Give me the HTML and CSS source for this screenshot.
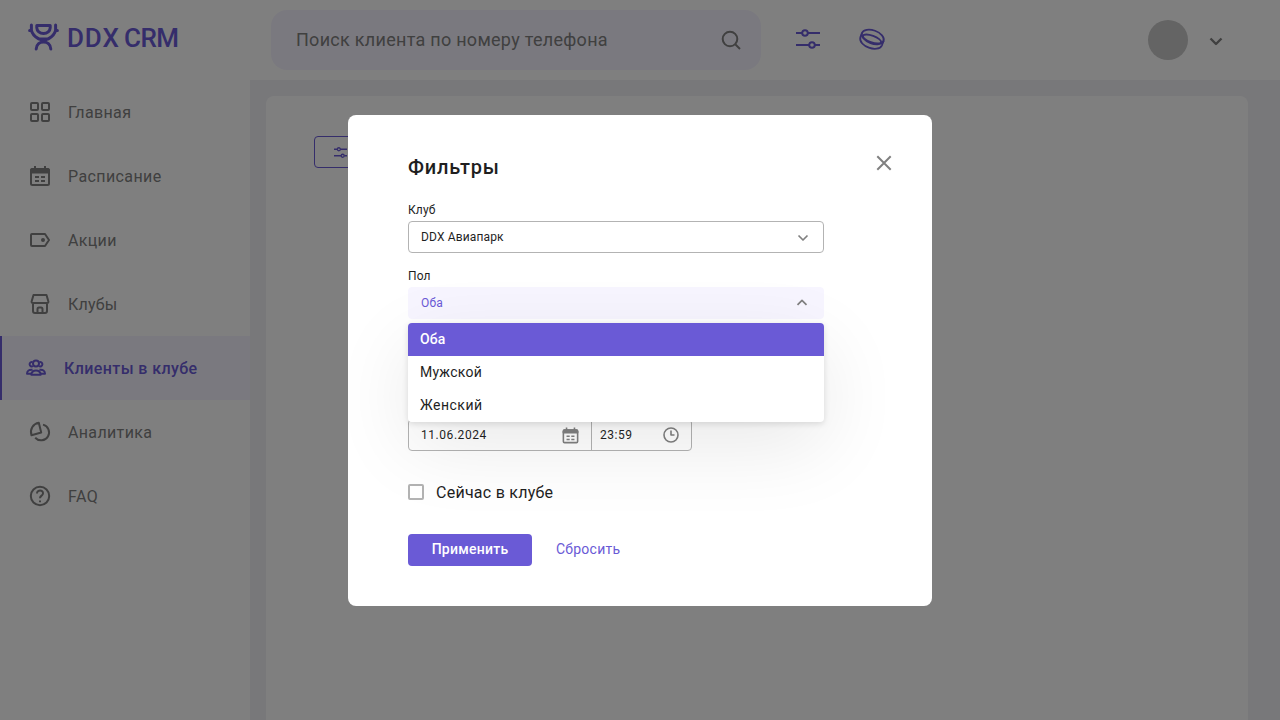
FILE: index.html
```html
<!DOCTYPE html>
<html lang="ru">
<head>
<meta charset="utf-8">
<title>DDX CRM</title>
<link rel="stylesheet" href="styles.css">
</head>
<body>
<svg class="defs" aria-hidden="true">
  <symbol id="calendar" viewBox="0 0 24 24"><path d="M3 8.500V6.500Q3 5 4.500 5h15Q21 5 21 6.500v2z" fill="currentColor"/><rect x="3" y="5" width="18" height="16" rx="1.500"/><path d="M7 2V5M17 2V5M7 13h4M13 13h4M7 17h4M13 17h4"/></symbol>
  <symbol id="sliders" viewBox="0 0 24 20"><path d="M0 4h6M12 4h12M0 16h13M19 16h5"/><circle cx="9" cy="4" r="2.800"/><circle cx="16" cy="16" r="2.800"/></symbol>
</svg>
<div class="app">
  <aside class="sidebar">
    <div class="logo">
      <svg class="logo-mark" width="32" height="28" viewBox="0 0 32 28"><path d="M8.800 2.600h13.400v2.200a6.700 5.700 0 0 1-13.400 0zM3.400 2v5.500M27.600 2v5.500M1.600 7.400h1.800C5 13.500 9 14.500 11 16h9c2-1.500 6-2.500 7.600-8.600h1.800M8.200 26c.4-9.500 14.200-9.500 14.600 0M12.500 16.500l3 1.200 3-1.200"/></svg>
      <span class="logo-text"><span class="logo-ddx">DDX</span><span class="logo-crm">CRM</span></span>
    </div>
    <nav class="menu">
      <a class="item"><svg width="24" height="24" viewBox="0 0 24 24"><rect x="3" y="3" width="7" height="7" rx="1"/><rect x="14" y="3" width="7" height="7" rx="1"/><rect x="3" y="14" width="7" height="7" rx="1"/><rect x="14" y="14" width="7" height="7" rx="1"/></svg><span class="t-main">Главная</span></a>
      <a class="item"><svg width="24" height="24"><use href="#calendar"/></svg><span class="t-schedule">Расписание</span></a>
      <a class="item"><svg width="24" height="24" viewBox="0 0 24 24"><path d="M4 6h13l4 6-4 6H4q-1 0-1-1V7q0-1 1-1z"/><circle cx="15" cy="12" r="2" fill="currentColor" stroke="none"/></svg><span class="t-promo">Акции</span></a>
      <a class="item"><svg width="24" height="24" viewBox="0 0 24 24"><path d="M5.500 3h13l1.900 6.500q.2 1.500-1.300 1.500H4.900Q3.400 11 3.600 9.500zM5 11v8q0 2 2 2h10q2 0 2-2v-8M9.500 21v-4q0-1.500 1.500-1.500h2q1.500 0 1.500 1.500v4"/></svg><span class="t-clubs">Клубы</span></a>
      <a class="item active"><svg width="24" height="24" viewBox="0 0 24 24"><circle cx="12" cy="7.500" r="3"/><path d="M8.500 6.200a2.200 2.200 0 1 0 .4 4M15.500 6.200a2.200 2.200 0 1 1-.4 4M7.300 18.700c-.4-5.500 9.800-5.500 9.400 0zM8.500 13.700c-3.400-.4-5.500 1-5.500 4.100h4M15.500 13.700c3.400-.4 5.500 1 5.500 4.100h-4"/></svg><span class="t-clients">Клиенты в клубе</span></a>
      <a class="item"><svg width="24" height="24" viewBox="0 0 24 24"><path d="M10.800 2.800 13.200 12.500 3.500 15.300C1.500 9.500 5 3.800 10.800 2.800zM15 4.600a8 8 0 1 1-7.800 13.200"/></svg><span class="t-analytics">Аналитика</span></a>
      <a class="item"><svg width="24" height="24" viewBox="0 0 24 24"><circle cx="12" cy="12" r="9.200"/><path d="M9 9.500c0-4 6.300-3.800 6 0-.2 2.300-3 2-3 4.700M12 16.500v1.800"/></svg><span class="t-faq">FAQ</span></a>
    </nav>
  </aside>
  <div class="content">
    <header class="topbar">
      <div class="search"><span>Поиск клиента по номеру телефона</span><svg width="24" height="24" viewBox="0 0 24 24"><circle cx="11" cy="11" r="7.300"/><path d="m16.500 16.500 4.500 4.500"/></svg></div>
      <svg class="tool-sliders" width="24" height="20"><use href="#sliders"/></svg>
      <svg class="tool-ring" width="28" height="24" viewBox="0 0 28 24"><g transform="rotate(20 14 12)"><ellipse cx="14" cy="9.800" rx="11.500" ry="6.600"/><ellipse cx="14" cy="12" rx="9.600" ry="3.300"/><path d="M2.500 9.500v5c1 9 22 9 23 0v-5"/></g></svg>
      <div class="avatar"></div>
      <svg class="user-arrow" width="16" height="16" viewBox="0 0 16 16"><path d="m2.500 5.500 5.500 5.500 5.500-5.500"/></svg>
    </header>
    <main class="page"><section class="panel"><div class="filter-button"><svg width="13" height="11"><use href="#sliders"/></svg></div></section></main>
  </div>
</div>
<div class="overlay">
  <form class="modal">
    <div class="modal-head"><h1>Фильтры</h1><svg width="24" height="24" viewBox="0 0 24 24"><path d="M5.300 5.300 18.700 18.700M18.700 5.300 5.300 18.700"/></svg></div>
    <div class="field"><label class="t-club">Клуб</label><div class="select"><span class="t-park">DDX Авиапарк</span><svg width="16" height="16" viewBox="0 0 16 16"><path d="m3.500 6.500 4.500 4.500 4.500-4.500"/></svg></div></div>
    <div class="field sex"><label class="t-sex">Пол</label><div class="select open"><span>Оба</span><svg width="16" height="16" viewBox="0 0 16 16"><path d="m3.500 9.800 4.500-4.500 4.500 4.500"/></svg></div>
      <div class="dropdown"><div class="option selected">Оба</div><div class="option t-male">Мужской</div><div class="option t-female">Женский</div></div>
    </div>
    <div class="period"><div class="date"><span>11.06.2024</span><svg width="19" height="19" class="date-icon"><use href="#calendar"/></svg></div><div class="time"><span>23:59</span><svg width="20" height="20" viewBox="0 0 20 20" class="clock"><circle cx="10" cy="10" r="7"/><path d="M10 5.500V10h3.500"/></svg></div></div>
    <div class="check"><span class="box"></span><span class="t-now">Сейчас в клубе</span></div>
    <div class="actions"><span class="apply">Применить</span><span class="reset">Сбросить</span></div>
  </form>
</div>
</body>
</html>
```
FILE: styles.css
```css
* { box-sizing: border-box; }
body { margin: 0; overflow: hidden; font-family: Roboto, "Noto Sans", sans-serif; color: #1f1f1f; }
svg { display: block; flex: none; fill: none; stroke: currentColor; stroke-width: 2; stroke-linejoin: round; }
.defs { position: absolute; width: 0; height: 0; }
.app { display: flex; height: 720px; }
.sidebar { width: 250px; background: #fff; flex: none; }
.logo { display: flex; height: 80px; padding: 23px 0 0 28px; color: #6a5ad6; }
.logo-mark { stroke-width: 3; stroke-linecap: round; }
.logo-text { display: flex; margin-left: 7px; font-size: 26px; line-height: 30px; font-weight: 500; }
.logo-ddx { width: 57px; letter-spacing: .9px; }
.logo-crm { letter-spacing: -.5px; }
.item { display: flex; align-items: center; height: 64px; padding-left: 28px; gap: 16px; color: #808080; font-size: 16px; letter-spacing: .35px; }
.item.active { background: #f5f3ff; color: #6a5ad6; border-left: 2px solid #6a5ad6; padding-left: 22px; font-weight: 500; letter-spacing: .4px; }
.t-schedule { letter-spacing: .4px; }
.t-clubs { letter-spacing: .2px; }
.t-faq { letter-spacing: .5px; }
.content { flex: 1; display: flex; flex-direction: column; }
.topbar { height: 80px; background: #fff; display: flex; align-items: center; padding-left: 21px; color: #6a5ad6; }
.search { width: 490px; height: 60px; border-radius: 16px; background: #f5f3ff; color: #808080; display: flex; align-items: center; justify-content: space-between; padding: 0 18px 0 25px; font-size: 18px; letter-spacing: .28px; }
.search span { padding-bottom: 2px; }
.tool-sliders { margin: 0 0 2px 35px; }
.tool-ring { margin: 0 0 2px 38px; stroke-width: 1.8; }
.avatar { width: 40px; height: 40px; border-radius: 50%; background: #c8c8c8; margin-left: 262px; }
.user-arrow { margin: 2px 0 0 20px; color: #808080; stroke-width: 2.4; }
.page { flex: 1; background: #f0f0f5; padding: 16px 32px 0 16px; }
.panel { height: 100%; background: #fff; border-radius: 8px 8px 0 0; padding: 40px 48px; }
.filter-button { width: 130px; height: 32px; border: 1px solid #6a5ad6; border-radius: 4px; color: #6a5ad6; padding: 10px 19px; }
.filter-button svg { stroke-width: 2.4; }
.overlay { position: fixed; inset: 0; background: rgba(0, 0, 0, .5); padding-top: 115px; }
.modal { width: 584px; height: 491px; margin: 0 auto; padding: 36px 36px 0 60px; background: #fff; border-radius: 8px; }
.modal-head { display: flex; justify-content: space-between; height: 51px; }
.modal-head svg { color: #808080; }
h1 { margin: 0; font-size: 20px; line-height: 32px; font-weight: 500; letter-spacing: .8px; }
.field { position: relative; width: 416px; height: 66px; font-size: 12px; letter-spacing: .15px; }
.field label { display: block; height: 19px; line-height: 16px; }
.select { height: 32px; border: 1px solid #b3b3b3; border-radius: 4px; display: flex; align-items: center; justify-content: space-between; padding: 0 12px; }
.select svg { color: #808080; stroke-width: 1.7; }
.open { color: #6a5ad6; background: #f7f5ff; border-color: #f7f5ff; }
.open svg { margin-right: 1px; }
.dropdown { position: absolute; z-index: 2; top: 55px; left: 0; width: 416px; background: #fff; border-radius: 4px; overflow: hidden; font-size: 14px; box-shadow: 0 2px 6px rgba(0, 0, 0, .12), 0 24px 80px rgba(0, 0, 0, .09); }
.option { height: 33px; line-height: 33px; padding-left: 12px; }
.t-male { letter-spacing: .25px; }
.t-female { letter-spacing: .5px; }
.selected { background: #6a5ad6; color: #fff; font-weight: 500; }
.period { margin-top: 85px; display: flex; width: 284px; height: 32px; border: 1px solid #b3b3b3; border-radius: 4px; font-size: 12px; letter-spacing: .55px; }
.period svg { color: #808080; }
.period .clock { stroke-width: 1.6; }
.date, .time { display: flex; align-items: center; justify-content: space-between; padding: 0 11px 0 12px; }
.date { width: 183px; border-right: 1px solid #b3b3b3; }
.date-icon { margin-top: 1px; }
.time { flex: 1; padding: 0 10px 0 8px; }
.check { display: flex; align-items: center; gap: 12px; margin-top: 31px; height: 20px; font-size: 16px; letter-spacing: .25px; }
.box { width: 16px; height: 16px; border: 2px solid #b3b3b3; border-radius: 2px; }
.actions { display: flex; gap: 24px; margin-top: 32px; font-size: 14px; line-height: 31px; letter-spacing: .25px; }
.apply { width: 124px; height: 32px; text-align: center; background: #6a5ad6; color: #fff; border-radius: 4px; font-weight: 500; }
.reset { color: #6a5ad6; }
```
